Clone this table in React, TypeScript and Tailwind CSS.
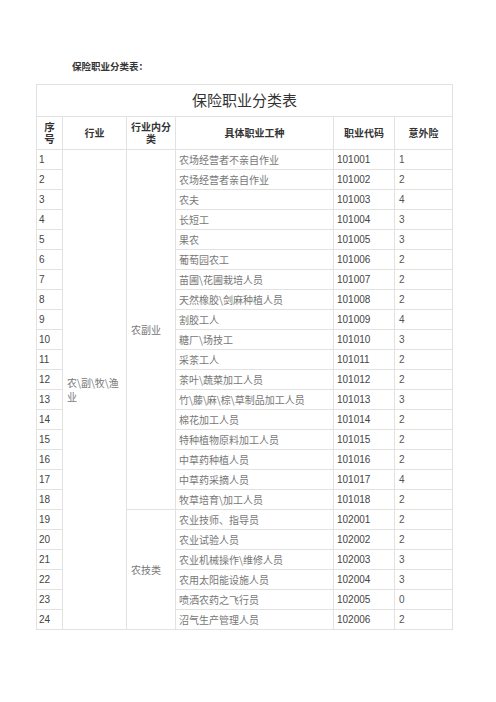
import React from "react";

type Row = { n: number; job: string; code: string; risk: string };

const rows: Row[] = [
  { n: 1, job: "农场经营者不亲自作业", code: "101001", risk: "1" },
  { n: 2, job: "农场经营者亲自作业", code: "101002", risk: "2" },
  { n: 3, job: "农夫", code: "101003", risk: "4" },
  { n: 4, job: "长短工", code: "101004", risk: "3" },
  { n: 5, job: "果农", code: "101005", risk: "3" },
  { n: 6, job: "葡萄园农工", code: "101006", risk: "2" },
  { n: 7, job: "苗圃\\花圃栽培人员", code: "101007", risk: "2" },
  { n: 8, job: "天然橡胶\\剑麻种植人员", code: "101008", risk: "2" },
  { n: 9, job: "割胶工人", code: "101009", risk: "4" },
  { n: 10, job: "糖厂\\场技工", code: "101010", risk: "3" },
  { n: 11, job: "采茶工人", code: "101011", risk: "2" },
  { n: 12, job: "茶叶\\蔬菜加工人员", code: "101012", risk: "2" },
  { n: 13, job: "竹\\藤\\麻\\棕\\草制品加工人员", code: "101013", risk: "3" },
  { n: 14, job: "棉花加工人员", code: "101014", risk: "2" },
  { n: 15, job: "特种植物原料加工人员", code: "101015", risk: "2" },
  { n: 16, job: "中草药种植人员", code: "101016", risk: "2" },
  { n: 17, job: "中草药采摘人员", code: "101017", risk: "4" },
  { n: 18, job: "牧草培育\\加工人员", code: "101018", risk: "2" },
  { n: 19, job: "农业技师、指导员", code: "102001", risk: "2" },
  { n: 20, job: "农业试验人员", code: "102002", risk: "2" },
  { n: 21, job: "农业机械操作\\维修人员", code: "102003", risk: "3" },
  { n: 22, job: "农用太阳能设施人员", code: "102004", risk: "3" },
  { n: 23, job: "喷洒农药之飞行员", code: "102005", risk: "0" },
  { n: 24, job: "沼气生产管理人员", code: "102006", risk: "2" },
];

const cjk = { fontFamily: '"Noto Sans CJK SC", sans-serif' };
const num = { fontFamily: '"Liberation Sans", "Noto Sans CJK SC", sans-serif' };

export default function App() {
  return (
    <div className="w-[496px] h-[702px] bg-white relative overflow-hidden">
      <div className="pt-[59px] pl-[72px]">
        <div
          className="text-[9.5px] leading-[14px] font-bold text-[#333]"
          style={cjk}
        >
          保险职业分类表：
        </div>
      </div>
      <div className="pl-[36px] pt-[11px]">
        <table className="w-[416px] table-fixed border-collapse border border-[#e2e2e2]">
          <colgroup>
            <col className="w-[26px]" />
            <col className="w-[64px]" />
            <col className="w-[49px]" />
            <col className="w-[158px]" />
            <col className="w-[61px]" />
            <col className="w-[58px]" />
          </colgroup>
          <tbody>
            <tr className="h-[32px]">
              <td
                colSpan={6}
                className="border border-[#e2e2e2] text-center text-[15px] text-[#333] p-0 align-middle"
                style={cjk}
              >
                保险职业分类表
              </td>
            </tr>
            <tr className="h-[33px]" style={cjk}>
              <th className="border border-[#e2e2e2] text-[10.5px] leading-[12px] font-bold text-[#333] px-[3px] align-middle">
                序号
              </th>
              <th className="border border-[#e2e2e2] text-[10px] leading-[12px] font-bold text-[#333] px-[3px] align-middle">
                行业
              </th>
              <th className="border border-[#e2e2e2] text-[10px] leading-[12px] font-bold text-[#333] px-[3px] align-middle">
                行业内分类
              </th>
              <th className="border border-[#e2e2e2] text-[10px] leading-[12px] font-bold text-[#333] px-[3px] align-middle">
                具体职业工种
              </th>
              <th className="border border-[#e2e2e2] text-[10px] leading-[12px] font-bold text-[#333] px-[3px] align-middle">
                职业代码
              </th>
              <th className="border border-[#e2e2e2] text-[10px] leading-[12px] font-bold text-[#333] px-[3px] align-middle">
                意外险
              </th>
            </tr>
            {rows.map((r, i) => (
              <tr key={r.n} className="h-[20px]">
                <td
                  className="border border-[#e2e2e2] text-[10px] leading-[12px] text-[#444] pl-[2px] pr-0 py-0 align-middle whitespace-nowrap"
                  style={num}
                >
                  {r.n}
                </td>
                {i === 0 && (
                  <td
                    rowSpan={24}
                    className="border border-[#e2e2e2] text-[10px] leading-[14px] text-[#777] pl-[4px] pr-[2px] align-middle"
                    style={cjk}
                  >
                    农\副\牧\渔
                    <br />
                    业
                  </td>
                )}
                {i === 0 && (
                  <td
                    rowSpan={18}
                    className="border border-[#e2e2e2] text-[10px] leading-[14px] text-[#777] pl-[4px] pr-[2px] align-middle"
                    style={cjk}
                  >
                    农副业
                  </td>
                )}
                {i === 18 && (
                  <td
                    rowSpan={6}
                    className="border border-[#e2e2e2] text-[10px] leading-[14px] text-[#777] pl-[4px] pr-[2px] align-middle"
                    style={cjk}
                  >
                    农技类
                  </td>
                )}
                <td
                  className="border border-[#e2e2e2] text-[10px] leading-[12px] text-[#777] pl-[3px] pr-0 py-0 align-middle whitespace-nowrap"
                  style={cjk}
                >
                  {r.job}
                </td>
                <td
                  className="border border-[#e2e2e2] text-[10px] leading-[12px] text-[#444] pl-[3px] pr-0 py-0 align-middle"
                  style={num}
                >
                  {r.code}
                </td>
                <td
                  className="border border-[#e2e2e2] text-[10px] leading-[12px] text-[#555] pl-[4px] pr-0 py-0 align-middle"
                  style={num}
                >
                  {r.risk}
                </td>
              </tr>
            ))}
          </tbody>
        </table>
      </div>
    </div>
  );
}
